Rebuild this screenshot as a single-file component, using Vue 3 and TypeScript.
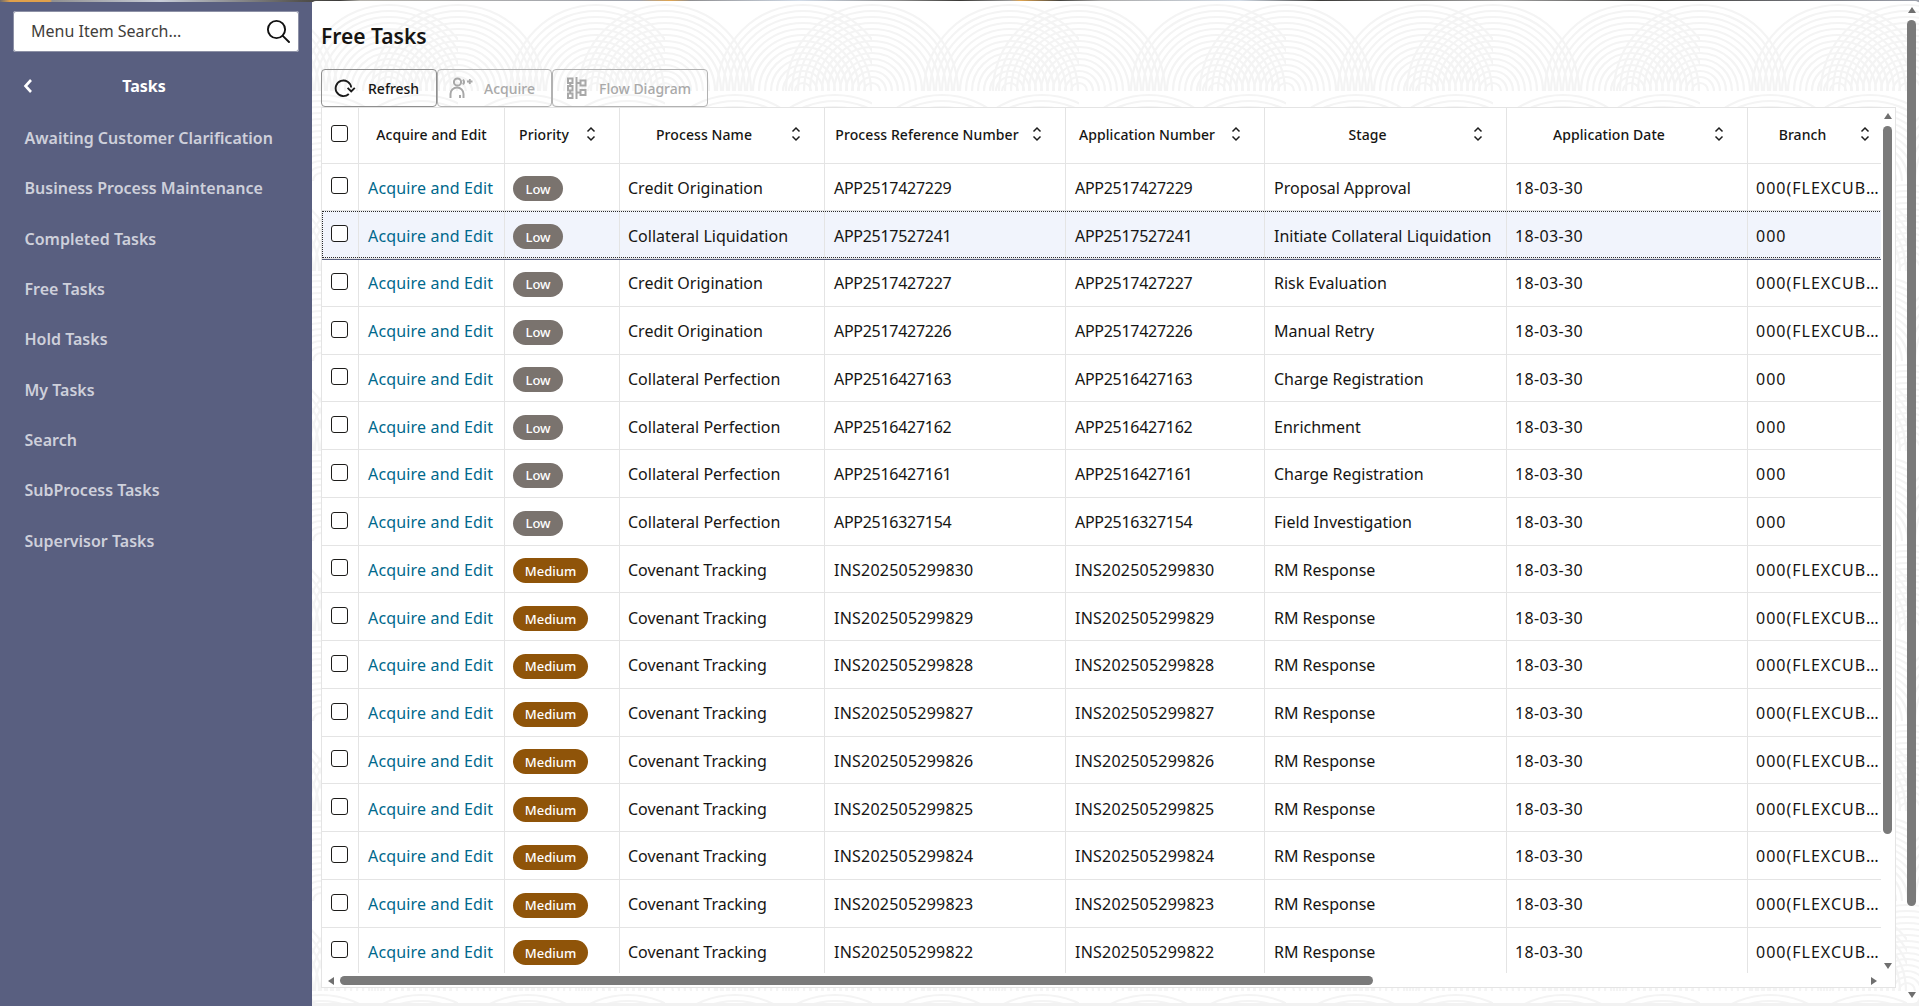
<script setup lang="ts">
interface Row { process: string; ref: string; stage: string; branch: string; priority: 'Low' | 'Medium' }
const flex = '000(FLEXCUB…'
const rows: Row[] = [
  { process: 'Credit Origination', ref: 'APP2517427229', stage: 'Proposal Approval', branch: flex, priority: 'Low' },
  { process: 'Collateral Liquidation', ref: 'APP2517527241', stage: 'Initiate Collateral Liquidation', branch: '000', priority: 'Low' },
  { process: 'Credit Origination', ref: 'APP2517427227', stage: 'Risk Evaluation', branch: flex, priority: 'Low' },
  { process: 'Credit Origination', ref: 'APP2517427226', stage: 'Manual Retry', branch: flex, priority: 'Low' },
  { process: 'Collateral Perfection', ref: 'APP2516427163', stage: 'Charge Registration', branch: '000', priority: 'Low' },
  { process: 'Collateral Perfection', ref: 'APP2516427162', stage: 'Enrichment', branch: '000', priority: 'Low' },
  { process: 'Collateral Perfection', ref: 'APP2516427161', stage: 'Charge Registration', branch: '000', priority: 'Low' },
  { process: 'Collateral Perfection', ref: 'APP2516327154', stage: 'Field Investigation', branch: '000', priority: 'Low' },
  ...[830, 829, 828, 827, 826, 825, 824, 823, 822].map((n): Row => ({
    process: 'Covenant Tracking', ref: `INS202505299${n}`, stage: 'RM Response', branch: flex, priority: 'Medium',
  })),
]
const menu = ['Awaiting Customer Clarification', 'Business Process Maintenance', 'Completed Tasks', 'Free Tasks', 'Hold Tasks', 'My Tasks', 'Search', 'SubProcess Tasks', 'Supervisor Tasks']
const headers = ['Priority', 'Process Name', 'Process Reference Number', 'Application Number', 'Stage', 'Application Date', 'Branch']
const radii = Array.from({ length: 14 }, (_, i) => 8 + i * 6)
const strip = 'linear-gradient(90deg,#6b6a6e 0,#e0a04a 10px,#e0a04a 50px,#8f8f90 52px,#c9ced8 160px,#55534f 300px,#3c3b39 340px,#b5b3ad 360px,#9fa3ad 640px,#e0a550 670px,#8e8e90 690px,#cfd9e6 800px,#8b8b8b 900px,#3a3936 960px,#9b9b9b 1010px,#e0a550 1020px,#44433f 1060px,#a9a9a9 1100px,#d2dbe6 1240px,#3c3b39 1320px,#a5a5a5 1500px,#3b3a38 1660px,#9ea2ad 1919px)'
</script>

<template>
  <div class="page" :style="{ backgroundImage: strip }">
    <aside class="sidebar">
      <div class="search">
        <span class="search-text">Menu Item Search...</span>
        <svg class="search-icon" viewBox="0 0 24 24" width="24" height="24" fill="none" stroke="#111" stroke-width="1.9">
          <circle cx="10.5" cy="10.5" r="8.6" />
          <path d="M16.8 16.8 L23 23" stroke-linecap="round" />
        </svg>
      </div>
      <div class="menu-head">
        <svg class="back" viewBox="0 0 10 16" width="10" height="16" fill="none" stroke="#fff" stroke-width="2.6">
          <path d="M8 2 L2.5 8 L8 14" />
        </svg>
        <span>Tasks</span>
      </div>
      <nav class="menu">
        <a v-for="m in menu" :key="m" class="menu-item">{{ m }}</a>
      </nav>
    </aside>

    <main class="main">
      <svg class="pattern" width="100%" height="100%" aria-hidden="true">
        <defs>
          <pattern id="swirl" x="146" y="0" width="207" height="180" patternUnits="userSpaceOnUse">
            <g fill="none" stroke="#f4f4f4" stroke-width="2.2">
              <svg x="0" y="0" width="207" height="90">
                <circle v-for="r in radii" :key="'a' + r" cx="0" cy="90" :r="r" />
                <circle v-for="r in radii" :key="'b' + r" cx="138" cy="90" :r="r" />
                <circle v-for="r in radii" :key="'c' + r" cx="207" cy="90" :r="r" />
              </svg>
              <svg x="0" y="90" width="207" height="90">
                <circle v-for="r in radii" :key="'d' + r" cx="70" cy="90" :r="r" />
                <circle v-for="r in radii" :key="'e' + r" cx="170" cy="90" :r="r" />
              </svg>
            </g>
          </pattern>
        </defs>
        <rect width="100%" height="100%" fill="url(#swirl)" />
      </svg>

      <h1 class="title">Free Tasks</h1>

      <div class="toolbar">
        <button class="btn btn-refresh">
          <svg viewBox="0 0 22 20" width="22" height="20" fill="none" stroke="#1a1a1a" stroke-width="1.9">
            <path d="M14.8 16 A7.8 7.8 0 1 1 17.2 9.5" />
            <path d="M13.6 9.8 L17.2 13.4 L20.8 9.8" stroke-width="1.9" />
          </svg>
          <span>Refresh</span>
        </button>
        <button class="btn btn-acquire" disabled>
          <svg viewBox="0 0 24 24" width="24" height="24" fill="none" stroke="#a8a8a8" stroke-width="2">
            <circle cx="8.5" cy="6" r="3.6" />
            <path d="M1.5 22 V18 A6.5 6.5 0 0 1 14.5 18 V22" />
            <path d="M14 3.5 Q16 6 14 8.5" />
            <path d="M11 19 V22" />
            <path d="M18 5.5 H23.5 M20.8 3 V8" stroke-width="1.8" />
          </svg>
          <span>Acquire</span>
        </button>
        <button class="btn btn-flow" disabled>
          <svg viewBox="0 0 20 22" width="20" height="22" fill="none" stroke="#a8a8a8" stroke-width="2">
            <rect x="1" y="1.5" width="4.5" height="4.5" />
            <rect x="1" y="9" width="4.5" height="4.5" />
            <rect x="1" y="16.5" width="4.5" height="4.5" />
            <path d="M3.2 6 V9 M3.2 13.5 V16.5" />
            <path d="M9.5 0 V22" />
            <rect x="13.5" y="3.5" width="5" height="5" />
            <rect x="13.5" y="13" width="5" height="5" />
            <path d="M9.5 6 H13.5 M9.5 15.5 H13.5" />
          </svg>
          <span>Flow Diagram</span>
        </button>
      </div>

      <section class="table-box">
        <div class="viewport">
          <div class="row head">
            <div class="cell"><span class="check head-check" /></div>
            <div class="cell th-plain">Acquire and Edit</div>
            <div v-for="h in headers" :key="h" class="cell th">
              <span class="th-label">{{ h }}</span>
              <svg class="sort" viewBox="0 0 16 20" width="16" height="20" fill="none" stroke="#1c1c1c" stroke-width="1.5">
                <path d="M4.5 7.5 L8 4 L11.5 7.5" />
                <path d="M4.5 12.5 L8 16 L11.5 12.5" />
              </svg>
            </div>
          </div>
          <div v-for="(r, i) in rows" :key="r.ref" class="row body" :class="{ selected: i === 1 }">
            <div class="cell"><span class="check" /></div>
            <div class="cell wide"><a class="link">Acquire and Edit</a></div>
            <div class="cell"><span class="pill" :class="r.priority.toLowerCase()">{{ r.priority }}</span></div>
            <div class="cell tight-left">{{ r.process }}</div>
            <div class="cell" :class="r.priority === 'Low' ? 'num-app' : 'num-ins'">{{ r.ref }}</div>
            <div class="cell" :class="r.priority === 'Low' ? 'num-app' : 'num-ins'">{{ r.ref }}</div>
            <div class="cell">{{ r.stage }}</div>
            <div class="cell date tight-left">18-03-30</div>
            <div class="cell branch tight-left">{{ r.branch }}</div>
          </div>
        </div>
        <div class="vbar inner-v">
          <i class="tri up" /><b class="thumb" /><i class="tri down" />
        </div>
        <div class="hbar">
          <i class="tri left" /><b class="thumb" /><i class="tri right" />
        </div>
      </section>

      <div class="vbar outer-v">
        <i class="tri up" /><b class="thumb" /><i class="tri down" />
      </div>
    </main>
  </div>
</template>

<style>
html, body { margin: 0; padding: 0; overflow: hidden; }
</style>

<style scoped>
.page {
  width: 1919px;
  height: 1006px;
  display: flex;
  padding-top: 1px;
  box-sizing: border-box;
  overflow: hidden;
  background-color: #f2f2f2;
  background-size: 100% 2px;
  background-repeat: no-repeat;
  font-family: "Noto Sans", "Open Sans", sans-serif;
  color: #161513;
}
.sidebar {
  width: 312px;
  flex: none;
  background: #595f80;
  margin-top: 1px;
}
.search {
  margin: 8.5px 13px 0 13px;
  height: 41px;
  background: #fff;
  border-radius: 3px;
  display: flex;
  align-items: center;
  justify-content: space-between;
  padding: 0 9px 0 18px;
  box-shadow: 0 0 0 1px #8d91a6 inset;
}
.search-text { font-size: 16px; color: #3f3e3b; }
.search-icon { flex: none; }
.menu-head {
  position: relative;
  height: 50px;
  margin-top: 9.5px;
  padding-right: 24px;
  box-sizing: border-box;
  display: flex;
  align-items: center;
  justify-content: center;
  color: #fff;
  font-weight: 700;
  font-size: 16px;
}
.back { position: absolute; left: 23px; top: 17px; }
.menu { padding-top: 2px; }
.menu-item {
  display: flex;
  align-items: center;
  height: 50.3px;
  padding-left: 24.5px;
  font-size: 16px;
  font-weight: 600;
  color: #ced0db;
}
.main {
  position: relative;
  flex: 1;
  min-width: 0;
  height: 1002px;
  background: #fff;
  border-radius: 4px 4px 6px 6px;
  padding-left: 9px;
  overflow: hidden;
}
.pattern { position: absolute; inset: 0; }
.title {
  position: relative;
  margin: 0;
  height: 68px;
  padding: 20px 0 0 0;
  box-sizing: border-box;
  font-size: 21px;
  line-height: 30px;
  font-weight: 600;
  color: #161513;
}
.toolbar { position: relative; display: flex; height: 38px; }
.btn {
  display: flex;
  align-items: center;
  height: 38px;
  box-sizing: border-box;
  border: 1px solid #8f8f8f;
  border-radius: 4px;
  background: transparent;
  font-family: inherit;
  font-size: 14px;
  font-weight: 500;
  color: #161513;
  padding: 0;
  margin: 0;
}
.btn:disabled { color: #a9a9a9; border-color: #b2b2b2; }
.btn-refresh { width: 116px; padding-left: 12px; gap: 12px; }
.btn-acquire { width: 115px; padding-left: 11px; gap: 11px; }
.btn-flow { width: 156px; padding-left: 14px; gap: 12px; }
.table-box {
  position: relative;
  width: 1575px;
  height: 881px;
  box-sizing: border-box;
  background: #fff;
  border: 1px solid #e4e4e4;
}
.viewport {
  width: 1559px;
  height: 865px;
  overflow: hidden;
}
.row {
  display: grid;
  grid-template-columns: 37px 146px 115px 205px 241px 199px 242px 241px 146px;
  width: 1572px;
}
.head { height: 55.5px; font-size: 14px; font-weight: 500; letter-spacing: 0.08px; }
.head .cell { padding-bottom: 2px; }
.body { height: 47.75px; font-size: 16px; }
.body .cell { padding-top: 2px; }
.cell {
  display: flex;
  align-items: center;
  box-sizing: border-box;
  padding-left: 9px;
  border-right: 1px solid #e4e4e4;
  border-bottom: 1px solid #e4e4e4;
  white-space: nowrap;
  overflow: hidden;
  min-width: 0;
}
.row > .cell:first-child { padding-left: 9px; }
.tight-left { padding-left: 8px; }
.wide { letter-spacing: 0.16px; }
.num-app { letter-spacing: -0.28px; }
.num-ins { letter-spacing: 0.22px; }
.date { letter-spacing: 0.35px; }
.branch { letter-spacing: 1px; }
.th-plain { justify-content: center; padding-left: 0; }
.th { padding-left: 0; padding-right: 20px; }
.th-label { flex: 1; text-align: center; }
.sort { flex: none; }
.check {
  display: block;
  width: 17px;
  height: 17px;
  box-sizing: border-box;
  border: 1.5px solid #1d1c1a;
  border-radius: 3px;
  background: #fff;
  transform: translateY(-2px);
}
.head-check { transform: translateY(-1px); }
.link { color: #00688c; }
.pill {
  display: flex;
  align-items: center;
  justify-content: center;
  height: 25px;
  border-radius: 13px;
  color: #fff;
  font-size: 13px;
  font-weight: 500;
  transform: translate(-1px, 1px);
}
.pill.low { width: 50px; background: #7a736e; }
.pill.medium { width: 75px; background: #8f5409; }
.selected { position: relative; background: #f1f4fc; box-shadow: 0 1px 0 #595f80; z-index: 1; }
.selected::after {
  content: "";
  position: absolute;
  inset: 0 0 1px 0;
  border-top: 1px dotted #2b2b2b;
  border-bottom: 1px dotted #2b2b2b;
  border-left: 1px dotted #2b2b2b;
  pointer-events: none;
}
.vbar { position: absolute; width: 9px; display: flex; flex-direction: column; align-items: center; }
.vbar .thumb { display: block; width: 9px; background: #7a7a7a; border-radius: 5px; }
.inner-v { left: 1561px; top: 5px; height: 856px; }
.inner-v .thumb { height: 708px; margin-top: 7px; }
.inner-v .down { margin-top: auto; }
.outer-v { left: 1595px; top: 6px; height: 991px; }
.outer-v .thumb { height: 886px; margin-top: 7px; }
.outer-v .down { margin-top: auto; }
.hbar {
  position: absolute;
  left: 6px;
  right: 18px;
  top: 868px;
  height: 9px;
  display: flex;
  align-items: center;
}
.hbar .thumb { display: block; width: 1033px; height: 9px; margin-left: 6px; background: #7a7a7a; border-radius: 5px; }
.hbar .right { margin-left: auto; }
.tri { display: block; width: 0; height: 0; border-style: solid; border-color: transparent; flex: none; }
.tri.up { border-width: 0 4.5px 6px; border-bottom-color: #6f6f6f; }
.tri.down { border-width: 6px 4.5px 0; border-top-color: #6f6f6f; }
.tri.left { border-width: 4.5px 6px 4.5px 0; border-right-color: #6f6f6f; }
.tri.right { border-width: 4.5px 0 4.5px 6px; border-left-color: #6f6f6f; }
</style>
